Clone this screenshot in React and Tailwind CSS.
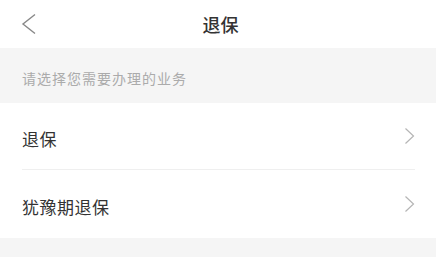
import React from 'react';

const items = ['退保', '犹豫期退保'];

const ChevronRight = () => (
  <svg width="11" height="18" viewBox="0 0 11 18" fill="none">
    <path d="M1.5 1.5 L9.5 9 L1.5 16.5" stroke="#b5b5b5" strokeWidth="1.2" />
  </svg>
);

const App = () => {
  return (
    <div
      className="w-[441px] h-[257px] bg-white overflow-hidden flex flex-col"
      style={{ fontFamily: '"Noto Sans CJK SC", "Noto Sans", sans-serif' }}
    >
      {/* header */}
      <div className="h-[48px] grid grid-cols-[1fr_auto_1fr] items-center">
        <div className="pl-[21px] flex items-center">
          <svg width="16" height="22" viewBox="0 0 16 22" fill="none">
            <path d="M14 1.5 L2 11 L14 20.5" stroke="#888888" strokeWidth="1.4" />
          </svg>
        </div>
        <span className="text-[18px] font-medium text-[#333333] leading-none">退保</span>
        <div />
      </div>

      <div className="h-[55px] mr-[5px] bg-[#f5f5f5] pl-[22px] pt-[5px] flex items-center">
        <span className="text-[14px] tracking-[1px] text-[#ababab]">请选择您需要办理的业务</span>
      </div>

      <div className="flex flex-col">
        {items.map((label, i) => (
          <div
            key={label}
            className={
              i === 0
                ? 'h-[67px] mx-[22px] mr-[26px] flex items-center justify-between border-b border-[#efefef]'
                : 'h-[68px] mx-[22px] mr-[26px] flex items-center justify-between'
            }
          >
            <span className="text-[17px] text-[#333333] tracking-[0.5px] pt-[6px]">{label}</span>
            <ChevronRight />
          </div>
        ))}
      </div>

      <div className="flex-1 mr-[5px] bg-[#f5f5f5]" />
    </div>
  );
};

export default App;
